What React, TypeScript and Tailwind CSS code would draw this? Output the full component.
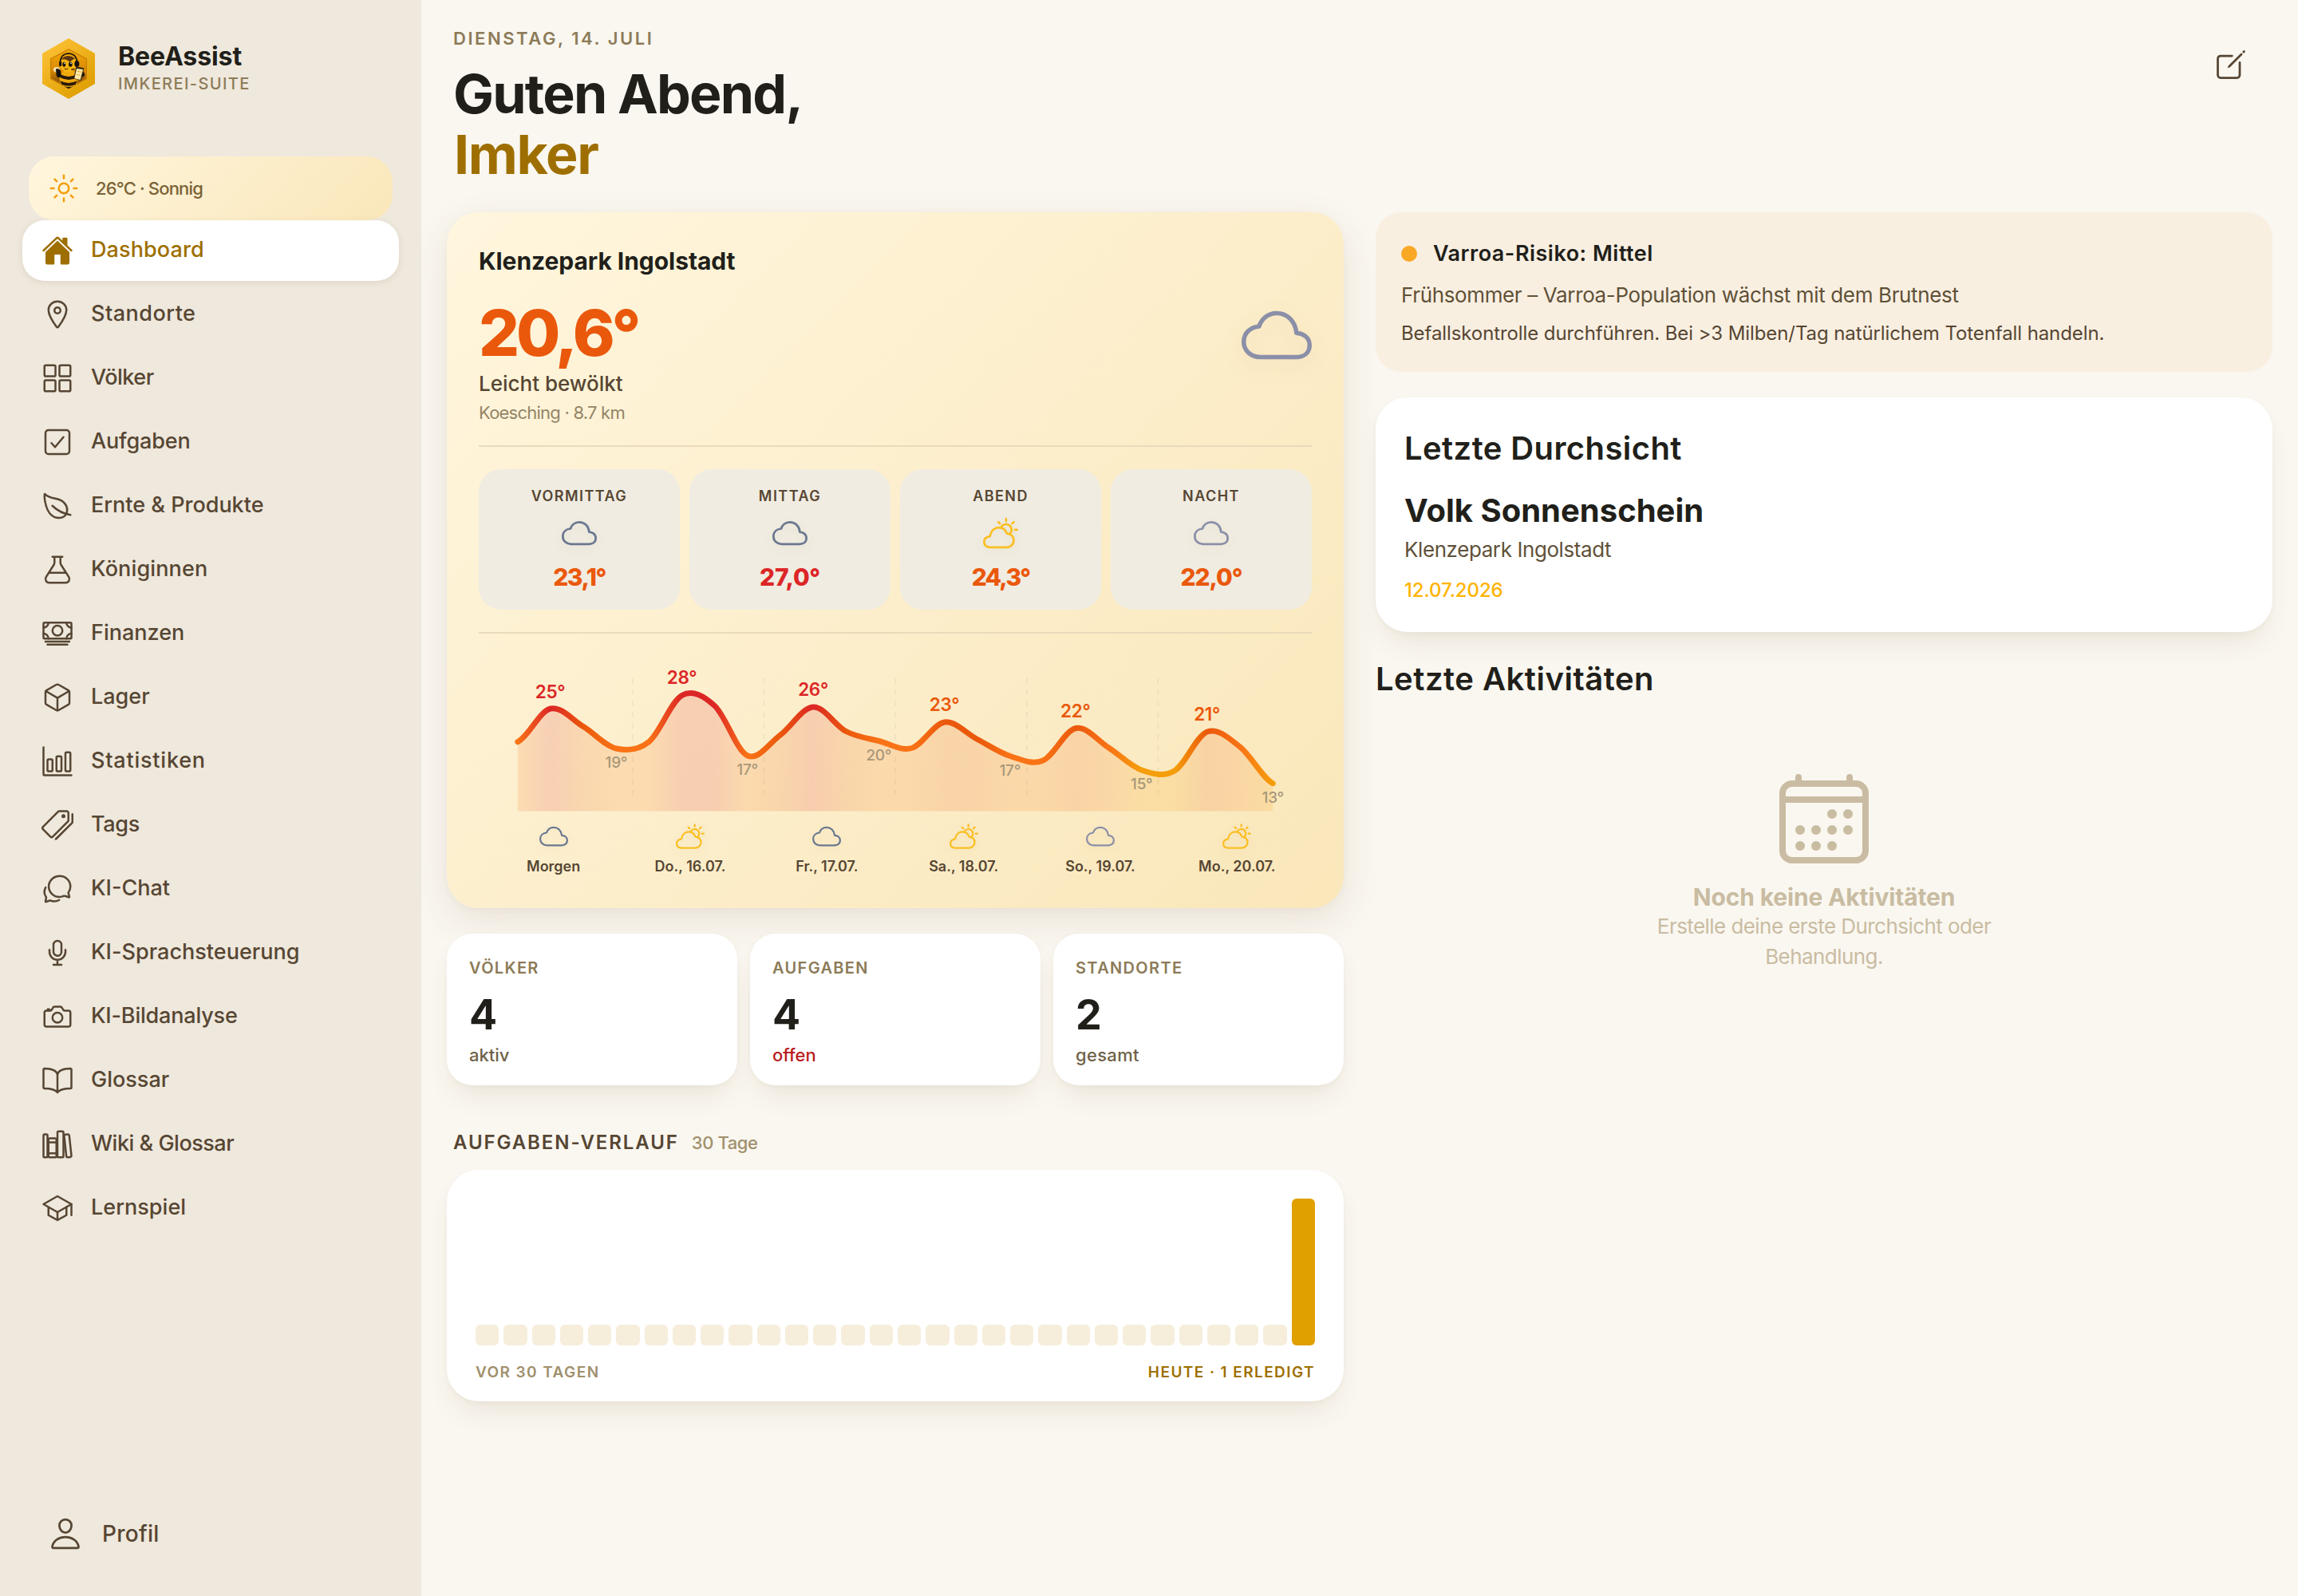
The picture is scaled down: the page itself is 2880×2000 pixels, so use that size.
import {
  IoBarChartOutline, IoBookOutline, IoCalendarOutline, IoCameraOutline, IoCashOutline,
  IoChatbubblesOutline, IoCheckboxOutline, IoCloudOutline, IoCreateOutline, IoCubeOutline,
  IoFlaskOutline, IoGridOutline, IoHome, IoLeafOutline, IoLibraryOutline, IoLocationOutline,
  IoMicOutline, IoPartlySunnyOutline, IoPersonOutline, IoPricetagsOutline, IoSchoolOutline,
  IoSunnyOutline,
} from "react-icons/io5";
import type { IconType } from "react-icons";

type NavItem = { label: string; icon: IconType; tracking?: string; active?: boolean };

const NAV: NavItem[] = [
  { label: "Dashboard",          icon: IoHome, active: true, tracking: "tracking-[0.004em]" },
  { label: "Standorte",          icon: IoLocationOutline,    tracking: "tracking-[0.018em]" },
  { label: "Völker",             icon: IoGridOutline,        tracking: "tracking-[-0.018em]" },
  { label: "Aufgaben",           icon: IoCheckboxOutline,    tracking: "tracking-[-0.006em]" },
  { label: "Ernte & Produkte",   icon: IoLeafOutline },
  { label: "Königinnen",         icon: IoFlaskOutline,       tracking: "tracking-[0.005em]" },
  { label: "Finanzen",           icon: IoCashOutline },
  { label: "Lager",              icon: IoCubeOutline },
  { label: "Statistiken",        icon: IoBarChartOutline,    tracking: "tracking-[0.029em]" },
  { label: "Tags",               icon: IoPricetagsOutline,   tracking: "tracking-[-0.012em]" },
  { label: "KI-Chat",            icon: IoChatbubblesOutline },
  { label: "KI-Sprachsteuerung", icon: IoMicOutline,         tracking: "tracking-[0.001em]" },
  { label: "KI-Bildanalyse",     icon: IoCameraOutline,      tracking: "tracking-[-0.007em]" },
  { label: "Glossar",            icon: IoBookOutline },
  { label: "Wiki & Glossar",     icon: IoLibraryOutline,     tracking: "tracking-[-0.018em]" },
  { label: "Lernspiel",          icon: IoSchoolOutline,      tracking: "tracking-[0.001em]" },
];

const CLOUD = { icon: IoCloudOutline,       color: "text-[#6b7890]" };
const NIGHT = { icon: IoCloudOutline,       color: "text-[#8b8fa8]" };
const SUNNY = { icon: IoPartlySunnyOutline, color: "text-[#fbbf24]" };

const DAYPARTS = [
  { label: "VORMITTAG", temp: "23,1°", tempClass: "text-[#ea580c] tracking-[-0.05em]",  weather: CLOUD },
  { label: "MITTAG",    temp: "27,0°", tempClass: "text-[#dc2626] tracking-[-0.01em]",  weather: CLOUD },
  { label: "ABEND",     temp: "24,3°", tempClass: "text-[#ea580c] tracking-[-0.06em]",  weather: SUNNY },
  { label: "NACHT",     temp: "22,0°", tempClass: "text-[#ea580c] tracking-[-0.038em]", weather: NIGHT },
];

const DAYS = [
  { label: "Morgen",      weather: CLOUD },
  { label: "Do., 16.07.", weather: SUNNY },
  { label: "Fr., 17.07.", weather: CLOUD },
  { label: "Sa., 18.07.", weather: SUNNY },
  { label: "So., 19.07.", weather: NIGHT },
  { label: "Mo., 20.07.", weather: SUNNY },
];

const STATS = [
  { label: "VÖLKER",    value: 4, hint: "aktiv",  hintClass: "text-[#6f6248]" },
  { label: "AUFGABEN",  value: 4, hint: "offen",  hintClass: "text-[#b91c1c]" },
  { label: "STANDORTE", value: 2, hint: "gesamt", hintClass: "text-[#6f6248] tracking-[0.014em]" },
];

const RED = "#dc2626";
const DEEP = "#ea580c";
const ORANGE = "#f97316";
const AMBER = "#f59e0b";

// four samples per day: [y, colour]
const SAMPLES: [number, string][] = [
  [107.7, ORANGE], [66, RED],     [88.6, DEEP],   [116, ORANGE],
  [107.5, ORANGE], [49.5, RED],   [62.5, RED],    [125, ORANGE],
  [99, DEEP],      [64, RED],     [94.5, DEEP],   [106.5, ORANGE],
  [115.5, ORANGE], [83, DEEP],    [104.5, DEEP],  [125.5, ORANGE],
  [131, ORANGE],   [90.5, DEEP],  [115, ORANGE],  [143, AMBER],
  [144, AMBER],    [95, DEEP],    [114, ORANGE],  [159.7, AMBER],
];
const X0 = 48.8;
const STEP = 41.15;
const BASE = 194.6;

const HIGHS = [
  { x: 89.5,  y: 53, t: "25°", c: RED },
  { x: 254.5, y: 35, t: "28°", c: RED },
  { x: 419,   y: 50, t: "26°", c: RED },
  { x: 583.5, y: 69, t: "23°", c: DEEP },
  { x: 747.7, y: 77, t: "22°", c: DEEP },
  { x: 912.6, y: 81, t: "21°", c: DEEP },
];
const LOWS = [
  { x: 172.4, y: 140, t: "19°" },
  { x: 336.6, y: 149, t: "17°" },
  { x: 501.3, y: 131, t: "20°" },
  { x: 665.8, y: 150, t: "17°" },
  { x: 830.8, y: 167, t: "15°" },
  { x: 995.3, y: 184, t: "13°" },
];

function smoothPath(ys: number[]) {
  const x = (i: number) => X0 + i * STEP;
  const y = (i: number) => ys[Math.max(0, Math.min(ys.length - 1, i))];
  let d = `M${x(0)} ${y(0)}`;
  for (let i = 0; i < ys.length - 1; i++) {
    const c1 = y(i) + (y(i + 1) - y(i - 1)) / 6;
    const c2 = y(i + 1) - (y(i + 2) - y(i)) / 6;
    d += `C${x(i) + STEP / 3} ${c1} ${x(i + 1) - STEP / 3} ${c2} ${x(i + 1)} ${y(i + 1)}`;
  }
  return d;
}

function TempChart() {
  const line = smoothPath(SAMPLES.map(([y]) => y));
  const end = X0 + STEP * (SAMPLES.length - 1);
  return (
    <svg viewBox="0 0 1044 200" className="mt-7 block h-[200px] w-full overflow-visible">
      <defs>
        <linearGradient id="temp" gradientUnits="userSpaceOnUse" x1={X0} x2={end} y1="0" y2="0">
          {SAMPLES.map(([, c], i) => (
            <stop key={i} offset={i / (SAMPLES.length - 1)} stopColor={c} />
          ))}
        </linearGradient>
      </defs>
      <path d={`${line}L${end} ${BASE}L${X0} ${BASE}Z`} fill="url(#temp)" opacity="0.16" />
      {[0, 1, 2, 3, 4].map((i) => (
        <line
          key={i}
          x1={192.8 + i * 164.65}
          x2={192.8 + i * 164.65}
          y1="28"
          y2="174"
          stroke="#8c7b58"
          strokeOpacity="0.09"
          strokeWidth="2"
          strokeDasharray="7 7"
        />
      ))}
      <path d={line} fill="none" stroke="url(#temp)" strokeWidth="7" strokeLinecap="round" />
      {HIGHS.map((p) => (
        <text key={p.x} x={p.x} y={p.y} fill={p.c} textAnchor="middle" className="text-[22.5px] font-semibold tracking-[-0.015em]">
          {p.t}
        </text>
      ))}
      {LOWS.map((p) => (
        <text key={p.x} x={p.x} y={p.y} fill="#a8977a" textAnchor="middle" className="text-[19px] font-medium tracking-[-0.015em]">
          {p.t}
        </text>
      ))}
    </svg>
  );
}

function BeeLogo() {
  return (
    <svg viewBox="39 36 198 228" className="h-[76px] w-[66px] shrink-0">
      <defs>
        <linearGradient id="hex" x1="0" y1="0" x2="0.7" y2="1">
          <stop offset="0" stopColor="#ffc53d" />
          <stop offset="1" stopColor="#df9f00" />
        </linearGradient>
        <linearGradient id="comb" x1="0" y1="0" x2="0" y2="1">
          <stop offset="0" stopColor="#f3aa08" />
          <stop offset="0.55" stopColor="#d98a05" />
          <stop offset="1" stopColor="#5a3306" />
        </linearGradient>
        <clipPath id="inner">
          <path d="M138 75L207 112V188L138 226L69 188V112Z" />
        </clipPath>
      </defs>
      <path d="M138 36L237 93V207L138 264L39 207V93Z" fill="url(#hex)" />
      <g clipPath="url(#inner)">
        <path d="M69 75H207V226H69Z" fill="url(#comb)" />
        <path d="M138 77L205 113V187L138 224L71 187V113Z" fill="none" stroke="#c87f07" strokeWidth="4" />
        <ellipse cx="138" cy="190" rx="34" ry="36" fill="#f0a90c" />
        <path d="M108 172Q138 188 168 172L170 184Q138 200 107 184Z" fill="#2a1a0a" />
        <path d="M106 196Q138 212 170 196L164 210Q138 220 112 210Z" fill="#2a1a0a" />
        <path d="M118 216Q138 222 158 216L138 228Z" fill="#2a1a0a" />
        <ellipse cx="93" cy="154" rx="12" ry="10" fill="#f7e3b0" />
        <path d="M90 152Q100 146 108 158L110 178Q100 190 92 176Z" fill="#17120e" />
        <circle cx="136" cy="132" r="32" fill="#f6b311" />
        <path d="M112 112Q136 92 162 112Q148 118 142 126Q130 112 112 116Z" fill="#5b3410" />
        <path d="M106 128Q108 94 138 93Q168 94 170 128" fill="none" stroke="#17120e" strokeWidth="5" />
        <ellipse cx="107" cy="132" rx="5" ry="10" fill="#17120e" />
        <ellipse cx="169" cy="132" rx="9" ry="12" fill="#17120e" />
        <ellipse cx="121" cy="134" rx="6" ry="9" fill="#17120e" />
        <ellipse cx="145" cy="134" rx="7" ry="9" fill="#17120e" />
        <circle cx="123" cy="130" r="2.5" fill="#fff" />
        <circle cx="147" cy="130" r="2.5" fill="#fff" />
        <path d="M122 150Q129 157 137 149" fill="none" stroke="#3a210a" strokeWidth="3" />
        <path d="M148 154L160 151" stroke="#17120e" strokeWidth="4" />
        <circle cx="188" cy="172" r="10" fill="#17120e" />
        <path d="M166 142L196 148L186 194L157 188Z" fill="#3a2a14" />
        <path d="M168 150L192 153L182 192L160 187Z" fill="#fbe9a8" />
        <path d="M170 160L187 163M168 172L184 175" stroke="#e0a83a" strokeWidth="3" />
      </g>
    </svg>
  );
}

function Sidebar() {
  return (
    <aside className="relative z-10 flex h-full w-[528px] shrink-0 flex-col bg-[#efe8dc] text-[#564633]">
      <div className="mt-12 flex h-[76px] items-center gap-[29px] pl-[53px]">
        <BeeLogo />
        <div className="flex flex-col">
          <span className="text-[32px] font-bold leading-[34px] tracking-[-0.003em] text-[#211f1a]">BeeAssist</span>
          <span className="mt-[3px] text-[20px] font-medium leading-7 tracking-[0.07em] text-[#8c7b58]">IMKEREI-SUITE</span>
        </div>
      </div>

      <div className="mx-9 mt-[72px] flex h-20 items-center gap-5 rounded-[32px] bg-[linear-gradient(135deg,#fff6de,#fae7ba)] pl-6">
        <IoSunnyOutline className="size-10 text-[#f59e0b]" />
        <span className="text-[22px] font-medium tracking-[-0.038em] text-[#7a6236]">26°C · Sonnig</span>
      </div>

      <nav className="flex flex-col gap-1 px-7">
        {NAV.map(({ label, icon: Icon, tracking, active }) => (
          <a
            key={label}
            className={`flex h-[76px] items-center gap-5 rounded-[28px] pl-6 ${
              active ? "bg-white text-[#9e6f00] shadow-[0_2px_8px_rgba(87,60,20,0.1)]" : ""
            }`}
          >
            <Icon className="size-10" />
            <span className={`pb-px pl-0.5 text-[27px] font-medium ${tracking ?? ""}`}>{label}</span>
          </a>
        ))}
      </nav>

      <a className="mt-auto mb-14 flex h-11 items-center gap-6 pl-[60px]">
        <IoPersonOutline className="size-11" />
        <span className="text-[28px] font-medium tracking-[0.01em]">Profil</span>
      </a>
    </aside>
  );
}

function WeatherCard() {
  return (
    <section className="h-[872px] rounded-[40px] bg-[linear-gradient(135deg,#fff6de,#fae7ba)] p-10 shadow-[0_2px_8px_rgba(110,65,25,0.04),0_16px_48px_rgba(110,65,25,0.11)]">
      <h2 className="text-[30px] font-bold leading-[42px] tracking-[-0.002em] text-[#211f1a]">Klenzepark Ingolstadt</h2>
      <div className="mt-[29px] flex h-[153px] items-start justify-between">
        <div className="flex flex-col">
          <span className="text-[80px] font-extrabold leading-[80px] tracking-[-0.05em] text-[#ea580c]">20,6°</span>
          <span className="mt-1.5 text-[26px] font-medium leading-9 text-[#564633]">Leicht bewölkt</span>
          <span className="mt-[3px] text-[22px] leading-[30px] tracking-[-0.035em] text-[#948566]">Koesching · 8.7 km</span>
        </div>
        <IoCloudOutline className="-mt-px size-[88px] text-[#8b8fa8] drop-shadow-[0_8px_12px_rgba(87,60,20,0.1)]" />
      </div>
      <div className="mt-[28px] h-0.5 bg-[#e9dabb]" />

      <div className="mt-7 grid grid-cols-4 gap-3">
        {DAYPARTS.map(({ label, temp, tempClass, weather: { icon: Icon, color } }) => (
          <div key={label} className="flex h-[176px] flex-col items-center rounded-[28px] bg-[#f0ece1] pt-[22px]">
            <span className="text-[18px] font-semibold leading-6 tracking-[0.08em] text-[#564633]">{label}</span>
            <Icon className={`mt-3 size-11 drop-shadow-[0_4px_6px_rgba(87,60,20,0.08)] ${color}`} />
            <span className={`mt-[13px] text-[30px] font-extrabold leading-10 ${tempClass}`}>{temp}</span>
          </div>
        ))}
      </div>
      <div className="mt-7 h-0.5 bg-[#e9dabb]" />

      <TempChart />

      <div className="mt-2 grid grid-cols-6 px-2">
        {DAYS.map(({ label, weather: { icon: Icon, color } }) => (
          <div key={label} className="flex flex-col items-center gap-2">
            <Icon className={`size-9 drop-shadow-[0_4px_6px_rgba(87,60,20,0.08)] ${color}`} />
            <span className="text-[18px] font-semibold leading-6 text-[#564633]">{label}</span>
          </div>
        ))}
      </div>
    </section>
  );
}

function TaskHistory() {
  const bars = Array.from({ length: 30 }, (_, i) => (i === 29 ? 1 : 0));
  return (
    <>
      <div className="mt-14 flex h-8 items-baseline gap-4 pl-2">
        <h3 className="text-[24px] font-semibold leading-8 tracking-[0.08em] text-[#564633]">AUFGABEN-VERLAUF</h3>
        <span className="text-[22px] font-medium tracking-[-0.02em] text-[#a08f6c]">30 Tage</span>
      </div>
      <section className="mt-[18px] h-[290px] rounded-[40px] bg-white p-9 shadow-[0_2px_6px_rgba(110,65,25,0.04),0_20px_36px_-12px_rgba(110,65,25,0.12)]">
        <div className="flex h-[184px] items-end gap-1.5">
          {bars.map((n, i) => (
            <div key={i} className={`flex-1 rounded-md ${n ? "h-full bg-[#dfa000]" : "h-[26px] bg-[#f6eedb]"}`} />
          ))}
        </div>
        <div className="mt-5 flex justify-between text-[19px] font-semibold leading-7 tracking-[0.075em]">
          <span className="text-[#a08f6c]">VOR 30 TAGEN</span>
          <span className="text-[#9e6f00]">HEUTE · 1 ERLEDIGT</span>
        </div>
      </section>
    </>
  );
}

export default function App() {
  return (
    <div className="flex h-[2000px] w-[2880px] overflow-hidden bg-[#faf7f0] font-['Inter',sans-serif]">
      <Sidebar />

      <main className="flex-1 pl-8 pr-8">
        <header className="flex h-[266px] items-start justify-between pl-2">
          <div className="pt-[34px]">
            <p className="text-[22px] font-semibold leading-7 tracking-[0.116em] text-[#8c7b58]">DIENSTAG, 14. JULI</p>
            <h1 className="mt-[17px] text-[68px] font-bold leading-[76px] tracking-[-0.026em] text-[#211f1a]">
              Guten Abend,
              <br />
              <span className="pl-px tracking-[-0.02em] text-[#9e6f00]">Imker</span>
            </h1>
          </div>
          <IoCreateOutline className="mr-[30px] mt-[59px] size-11 text-[#564633]" />
        </header>

        <div className="grid grid-cols-2 gap-10">
          <div>
            <WeatherCard />

            <div className="mt-8 grid grid-cols-3 gap-4">
              {STATS.map((s) => (
                <div
                  key={s.label}
                  className="flex h-[190px] flex-col rounded-[32px] bg-white pl-7 pt-[29px] shadow-[0_2px_6px_rgba(110,65,25,0.04),0_20px_36px_-12px_rgba(110,65,25,0.12)]"
                >
                  <span className="text-[20px] font-semibold leading-7 tracking-[0.067em] text-[#8c7b58]">{s.label}</span>
                  <span className="mt-[15px] text-[52px] font-bold leading-[60px] text-[#211f1a]">{s.value}</span>
                  <span className={`mt-[5px] text-[22px] font-medium leading-[30px] ${s.hintClass}`}>{s.hint}</span>
                </div>
              ))}
            </div>

            <TaskHistory />
          </div>

          <div>
            <section className="h-[200px] rounded-[32px] bg-[#f9efe1] px-8 pt-[35px]">
              <div className="flex h-[34px] items-center gap-5">
                <span className="size-5 rounded-full bg-[#f9a825]" />
                <h3 className="text-[27px] font-semibold leading-[34px] tracking-[0.018em] text-[#211f1a]">Varroa-Risiko: Mittel</h3>
              </div>
              <p className="mt-[17px] text-[26px] leading-9 tracking-[-0.014em] text-[#5f5138]">
                Frühsommer – Varroa-Population wächst mit dem Brutnest
              </p>
              <p className="mt-[13px] text-[24px] leading-[34px] tracking-[-0.004em] text-[#564633]">
                Befallskontrolle durchführen. Bei &gt;3 Milben/Tag natürlichem Totenfall handeln.
              </p>
            </section>

            <section className="mt-8 h-[294px] rounded-[40px] bg-white px-9 pt-[37px] shadow-[0_2px_6px_rgba(110,65,25,0.04),0_20px_36px_-12px_rgba(110,65,25,0.12)]">
              <h2 className="text-[40px] font-semibold leading-[54px] tracking-[0.01em] text-[#211f1a]">Letzte Durchsicht</h2>
              <p className="mt-[25px] text-[40px] font-bold leading-[52px] text-[#211f1a]">Volk Sonnenschein</p>
              <p className="mt-[5px] text-[26px] leading-9 tracking-[-0.016em] text-[#5f5138]">Klenzepark Ingolstadt</p>
              <p className="mt-4 text-[24px] font-medium leading-[34px] tracking-[-0.004em] text-[#ffb300]">12.07.2026</p>
            </section>

            <h2 className="mt-8 text-[40px] font-semibold leading-[54px] tracking-[0.0125em] text-[#211f1a]">Letzte Aktivitäten</h2>

            <div className="mt-[84px] flex flex-col items-center text-[#c9bca2]">
              <IoCalendarOutline className="size-32" />
              <p className="mt-[15px] text-[30px] font-bold leading-[38px] tracking-[-0.005em]">Noch keine Aktivitäten</p>
              <p className="-mt-px w-[440px] text-center text-[26px] leading-[38px] tracking-[-0.0215em]">
                Erstelle deine erste Durchsicht oder Behandlung.
              </p>
            </div>
          </div>
        </div>
      </main>
    </div>
  );
}
